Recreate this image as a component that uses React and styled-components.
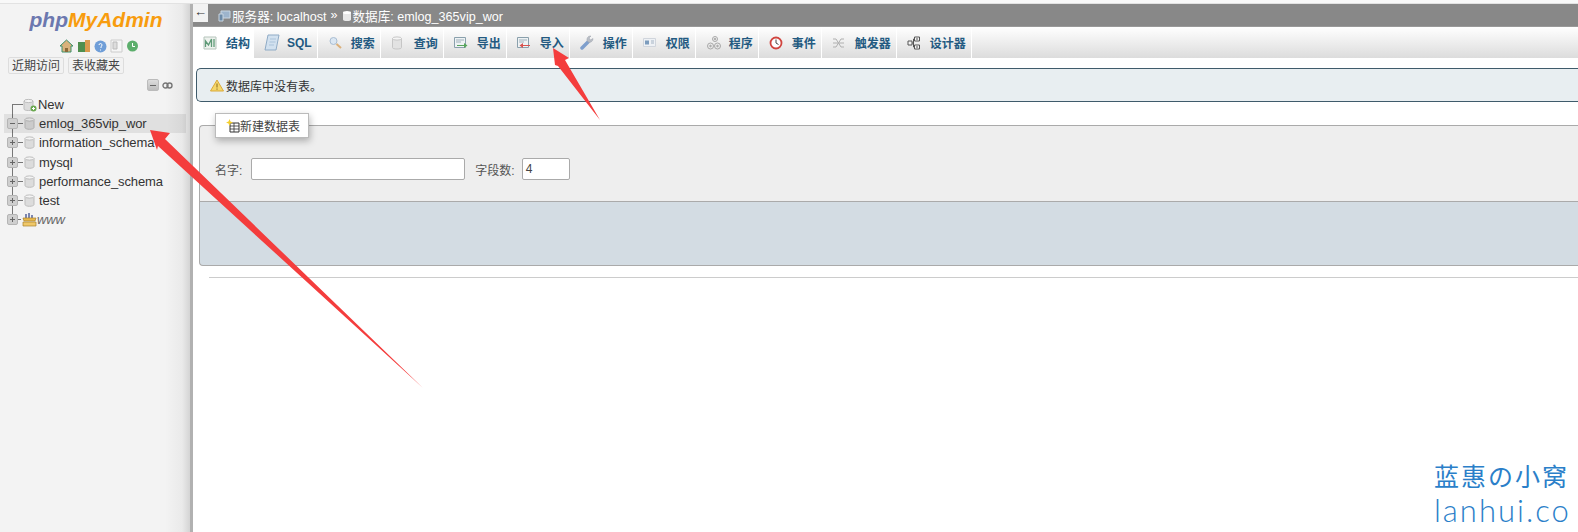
import React from 'react';
import styled, { createGlobalStyle } from 'styled-components';

const GlobalStyle = createGlobalStyle`
  html, body {
    margin: 0;
    padding: 0;
    background: #fff;
    overflow: hidden;
  }
  body {
    font-family: "Liberation Sans", "Noto Sans CJK SC", sans-serif;
    font-size: 12px;
    color: #444;
  }
`;

/* ---------- icons ---------- */

const Db = () => (
  <svg width="11" height="13" viewBox="0 0 11 13">
    <path d="M1 2.500v8c0 1 2 1.800 4.500 1.800S10 11.500 10 10.500v-8z" fill="#dcdcdc" stroke="#bdbdbd" />
    <ellipse cx="5.500" cy="2.500" rx="4.500" ry="1.600" fill="#f4f4f4" stroke="#bdbdbd" />
  </svg>
);

const NewDb = () => (
  <svg width="15" height="14" viewBox="0 0 15 14">
    <path d="M1 3v8c0 1 2 1.500 4.500 1.500S10 12 10 11V3z" fill="#dcdcdc" stroke="#bdbdbd" />
    <ellipse cx="5.500" cy="3" rx="4.500" ry="1.600" fill="#f4f4f4" stroke="#bdbdbd" />
    <circle cx="10.500" cy="10.500" r="3" fill="#6aa84f" />
    <path d="M9 10.500h3M10.500 9v3" stroke="#fff" />
  </svg>
);

const WwwIcon = () => (
  <svg width="15" height="15" viewBox="0 0 15 15">
    <path d="M3 6V2h2v4zM6 6V1h2v5zM9 6V3h2v3z" fill="#7c86b0" />
    <path d="M1 6h13l-1 3H2z" fill="#e8b84a" stroke="#a9822d" strokeWidth=".7" />
    <path d="M1 10h13v4H1z" fill="#f0c869" stroke="#a9822d" strokeWidth=".7" />
  </svg>
);

const TabIcon = ({ name }) => {
  switch (name) {
    case 'structure':
      return (
        <svg width="14" height="14" viewBox="0 0 14 14">
          <path d="M1 1h12v12H1z" fill="#eef2ee" stroke="#b5c4bb" />
          <path d="M2.500 11V5l3 4 3-6v8M11 3v8" fill="none" stroke="#5f9a78" strokeWidth="1.300" />
        </svg>
      );
    case 'sql':
      return (
        <svg width="16" height="17" viewBox="0 0 16 17">
          <path d="M4 1h11l-3 15H1z" fill="#d2e1ef" stroke="#8fabc6" />
          <path d="M6 5h6M5.500 8h6M5 11h5" stroke="#abc3da" />
        </svg>
      );
    case 'search':
      return (
        <svg width="15" height="14" viewBox="0 0 15 14">
          <circle cx="5.500" cy="5" r="3.500" fill="#dbe7f3" stroke="#a9bdd2" />
          <path d="M8.500 8l4.500 4" stroke="#dcb07a" strokeWidth="2" />
        </svg>
      );
    case 'query':
      return (
        <svg width="12" height="14" viewBox="0 0 12 14">
          <path d="M1.500 2.500v9c0 1 2 1.500 4.500 1.500s4.500-.5 4.500-1.500v-9z" fill="#e2e2e2" stroke="#c6c6c6" />
          <ellipse cx="6" cy="2.500" rx="4.500" ry="1.600" fill="#f5f5f5" stroke="#c6c6c6" />
        </svg>
      );
    case 'export':
      return (
        <svg width="14" height="12" viewBox="0 0 14 12">
          <path d="M.5 .5h11v10H.5z" fill="#eef2f4" stroke="#8aa0ac" />
          <path d="M2 3h8M2 5h5" stroke="#9fb0ba" />
          <path d="M3 8h7V6l3.500 2.500L10 11V9H3z" fill="#58a55c" />
        </svg>
      );
    case 'import':
      return (
        <svg width="14" height="12" viewBox="0 0 14 12">
          <path d="M.5 .5h11v10H.5z" fill="#eef2f4" stroke="#8aa0ac" />
          <path d="M2 3h8M2 5h5" stroke="#9fb0ba" />
          <path d="M13 8H6V6L2.500 8.500 6 11V9h7z" fill="#d8534f" />
        </svg>
      );
    case 'ops':
      return (
        <svg width="15" height="15" viewBox="0 0 15 15">
          <path d="M2 13l6-6" stroke="#7f9fcc" strokeWidth="3.500" strokeLinecap="round" />
          <path d="M8 7a3.500 3.500 0 0 1 3-6l-2 2 1.500 2 2.500-1.500A3.500 3.500 0 0 1 8 7z" fill="#b9bec6" stroke="#9aa0aa" strokeWidth=".5" />
        </svg>
      );
    case 'priv':
      return (
        <svg width="13" height="9" viewBox="0 0 13 9">
          <path d="M.5 .5h12v8H.5z" fill="#eef1f5" stroke="#d0d5dc" />
          <path d="M2 2.500h4v4H2z" fill="#7c9cbd" />
          <path d="M8 3h3M8 5h3" stroke="#a5b4c4" />
        </svg>
      );
    case 'routine':
      return (
        <svg width="16" height="16" viewBox="0 0 16 16" fill="none" stroke="#a8a8a8">
          <circle cx="9" cy="4" r="2.500" />
          <circle cx="4.500" cy="11" r="3" />
          <circle cx="11.500" cy="11" r="3" />
          <circle cx="9" cy="4" r=".8" fill="#a8a8a8" />
          <circle cx="4.500" cy="11" r=".8" fill="#a8a8a8" />
          <circle cx="11.500" cy="11" r=".8" fill="#a8a8a8" />
        </svg>
      );
    case 'event':
      return (
        <svg width="14" height="14" viewBox="0 0 14 14">
          <circle cx="7" cy="7" r="5.500" fill="#fff" stroke="#d0453f" strokeWidth="1.800" />
          <path d="M7 3.500V7l2.500 1.500" fill="none" stroke="#444" />
        </svg>
      );
    case 'trigger':
      return (
        <svg width="13" height="10" viewBox="0 0 13 10" fill="none" stroke="#b0b0b0">
          <path d="M1 1h3l5 8h3M1 9h3l5-8h3M1 5h11" />
        </svg>
      );
    default:
      return (
        <svg width="14" height="14" viewBox="0 0 14 14">
          <path d="M7.500 1h5v4h-5zM7.500 9h5v4h-5zM1 5h4v4H1z" fill="#f4f4f4" stroke="#555" />
          <path d="M5 7h1.500M6.500 3v8M6.500 3h1M6.500 11h1M9 3h2M9 11h2" stroke="#555" />
        </svg>
      );
  }
};

/* ---------- layout ---------- */

const Page = styled.div`
  width: 1578px;
  height: 532px;
  position: relative;
  overflow: hidden;
  background: #fff;
`;

const TopStrip = styled.div`
  height: 4px;
  background: #f8f8f8;
  border-bottom: 1px solid #e2e2e2;
  box-sizing: border-box;
`;

const Columns = styled.div`
  display: flex;
  height: 528px;
`;

const Sidebar = styled.aside`
  width: 190px;
  flex: none;
  background: linear-gradient(to right, #f3f3f3 0, #f3f3f3 165px, #eaeaea 182px, #d4d4d4 190px);
`;

const Main = styled.main`
  flex: 1;
  min-width: 0;
  border-left: 3px solid #b1b1b1;
  background: #fff;
`;

/* ---------- sidebar ---------- */

const Logo = styled.div`
  font: italic bold 21px "Liberation Sans", sans-serif;
  text-align: center;
  color: #f89c0e;
  padding: 4px 0 0 0;
  margin-left: 2px;
  height: 31px;
  box-sizing: border-box;
  white-space: nowrap;
`;

const Php = styled.span`
  color: #6c78af;
`;

const QuickIcons = styled.div`
  display: flex;
  align-items: center;
  gap: 3px;
  padding-left: 59px;
  height: 18px;
  margin-top: 2px;
`;

const RecentRow = styled.div`
  display: flex;
  gap: 4px;
  padding-left: 8px;
  margin-top: 2px;
`;

const RecentButton = styled.div`
  height: 17px;
  line-height: 16px;
  padding: 0 3px;
  font-size: 12px;
  color: #444;
  background: #f2f2f2;
  border: 1px solid #ddd;
  border-radius: 2px;
  box-sizing: border-box;
`;

const TreeTools = styled.div`
  display: flex;
  justify-content: flex-end;
  align-items: center;
  gap: 3px;
  padding-right: 17px;
  height: 12px;
  margin-top: 5px;
`;

const CollapseAll = styled.div`
  width: 12px;
  height: 12px;
  box-sizing: border-box;
  border: 1px solid #bbb;
  border-radius: 2px;
  background: linear-gradient(#ddd, #bdbdbd);
  display: flex;
  align-items: center;
  justify-content: center;
  &::before {
    content: '';
    width: 6px;
    height: 1px;
    background: #666;
  }
`;

const Tree = styled.ul`
  list-style: none;
  margin: 4px 0 0 4px;
  padding: 0;
  position: relative;
  width: 182px;
  &::before {
    content: '';
    position: absolute;
    left: 8px;
    top: 9px;
    height: 112px;
    width: 1px;
    background: #777;
  }
`;

const TreeRow = styled.li`
  height: 19.200px;
  display: flex;
  align-items: center;
  position: relative;
  padding-left: 3px;
  white-space: nowrap;
  font-size: 13px;
  color: #333;
`;

const ActiveBand = styled.span`
  position: absolute;
  inset: 0;
  background: rgba(0, 0, 0, 0.075);
`;

const Expander = styled.span`
  width: 11px;
  height: 11px;
  flex: none;
  box-sizing: border-box;
  border: 1px solid #b5b5b5;
  border-radius: 2px;
  background: #cfcfcf;
  position: relative;
  &::before {
    content: '';
    position: absolute;
    left: 2px;
    right: 2px;
    top: 4px;
    height: 1px;
    background: #666;
  }
  &::after {
    content: '';
    display: ${(p) => (p.$open ? 'none' : 'block')};
    position: absolute;
    top: 2px;
    bottom: 2px;
    left: 4px;
    width: 1px;
    background: #666;
  }
`;

const Spacer = styled.span`
  width: 5px;
  flex: none;
`;

const Dash = styled.span`
  width: ${(p) => p.$w || 5}px;
  height: 1px;
  flex: none;
  background: #777;
`;

const NodeIcon = styled.span`
  width: 15px;
  margin-left: ${(p) => p.$ml ?? 1}px;
  flex: none;
  display: flex;
  align-items: center;
`;

const NodeName = styled.span`
  font-style: ${(p) => (p.$italic ? 'italic' : 'normal')};
  color: ${(p) => (p.$italic ? '#666' : '#333')};
  letter-spacing: -0.1px;
  position: relative;
`;

/* ---------- main ---------- */

const ServerBar = styled.div`
  height: 23px;
  background: #888;
  display: flex;
  align-items: center;
  color: #fff;
  font-size: 12.600px;
  border-bottom: 1px solid #999;
  box-sizing: border-box;
`;

const BackButton = styled.div`
  width: 15px;
  height: 18px;
  margin-bottom: 5px;
  background: #f2f2f2;
  color: #333;
  font-size: 13px;
  line-height: 15px;
  text-align: center;
  margin-right: 10px;
`;

const Crumb = styled.span`
  display: inline-flex;
  align-items: center;
  gap: 1px;
  white-space: nowrap;
  margin-top: 1px;
`;

const Sep = styled.span`
  margin: 0 4px;
`;

const TabBar = styled.nav`
  height: 31px;
  display: flex;
  background: linear-gradient(#fff, #dcdcdc);
`;

const Tab = styled.div`
  display: flex;
  align-items: center;
  height: 100%;
  box-sizing: border-box;
  padding: 0 ${(p) => (p.$active ? 3 : 5)}px 0 10px;
  border-right: 1px solid #fff;
  font-size: 12px;
  font-weight: bold;
  color: #235a81;
  white-space: nowrap;
  background: ${(p) => (p.$active ? '#fff' : 'linear-gradient(#fff, #dcdcdc)')};
`;

const TabGlyph = styled.span`
  width: 16px;
  margin-right: 7px;
  flex: none;
  display: flex;
  align-items: center;
`;

const TabLabel = styled.span`
  min-width: 24px;
`;

const Notice = styled.div`
  margin: 10px 0 0 3px;
  height: 34px;
  box-sizing: border-box;
  display: flex;
  align-items: center;
  gap: 2px;
  padding-left: 13px;
  background: #e8eef1;
  border: 1px solid #3f5b6b;
  border-right: none;
  border-radius: 5px 0 0 5px;
  color: #333;
`;

const Fieldset = styled.section`
  margin: 23px 0 0 6px;
  height: 77px;
  box-sizing: border-box;
  background: #eee;
  border: 1px solid #aaa;
  border-right: none;
  border-radius: 4px 0 0 0;
`;

const Legend = styled.div`
  margin: -13px 0 0 15px;
  width: 94px;
  height: 25px;
  box-sizing: border-box;
  background: #fff;
  border: 1px solid #bbb;
  box-shadow: 1px 3px 7px rgba(0, 0, 0, 0.28);
  display: flex;
  align-items: center;
  padding-left: 10px;
  color: #444;
  font-size: 12px;
`;

const FormRow = styled.div`
  display: flex;
  align-items: center;
  margin: 20px 0 0 15px;
`;

const FieldLabel = styled.label`
  color: #555;
  font-size: 12px;
  margin-right: ${(p) => p.$mr}px;
`;

const TextInput = styled.div`
  width: ${(p) => p.$w}px;
  height: 22px;
  box-sizing: border-box;
  background: #fff;
  border: 1px solid #aaa;
  border-radius: 2px;
  margin-right: ${(p) => p.$mr || 0}px;
  padding-left: 3px;
  line-height: 20px;
  color: #444;
  font-size: 12px;
`;

const FieldsetFooter = styled.div`
  margin-left: 6px;
  height: 64px;
  box-sizing: border-box;
  background: #d3dce3;
  border: 1px solid #aaa;
  border-top: none;
  border-right: none;
  border-radius: 0 0 0 4px;
`;

const Rule = styled.hr`
  margin: 11px 0 0 16px;
  border: none;
  border-top: 1px solid #ccc;
`;

/* ---------- overlay ---------- */

const Arrows = styled.svg`
  position: absolute;
  inset: 0;
  pointer-events: none;
`;

const Watermark = styled.div`
  position: absolute;
  left: 1434px;
  top: 458px;
  width: 136px;
  color: #2b7fc9;
`;

const WatermarkTitle = styled.div`
  font: 25px "Noto Sans CJK SC", sans-serif;
  line-height: 34px;
  white-space: nowrap;
  letter-spacing: 2px;
`;

const WatermarkUrl = styled.div`
  font: 300 31px Lato, sans-serif;
  line-height: 36px;
  letter-spacing: 2px;
  white-space: nowrap;
`;

const tabs = [
  ['structure', '结构'],
  ['sql', 'SQL'],
  ['search', '搜索'],
  ['query', '查询'],
  ['export', '导出'],
  ['import', '导入'],
  ['ops', '操作'],
  ['priv', '权限'],
  ['routine', '程序'],
  ['event', '事件'],
  ['trigger', '触发器'],
  ['designer', '设计器'],
];

const databases = [
  { name: 'emlog_365vip_wor', open: true, active: true },
  { name: 'information_schema' },
  { name: 'mysql' },
  { name: 'performance_schema' },
  { name: 'test' },
];

export default function App() {
  return (
    <Page>
      <GlobalStyle />
      <TopStrip />
      <Columns>
        <Sidebar>
          <Logo>
            <Php>php</Php>MyAdmin
          </Logo>
          <QuickIcons>
            <svg width="15" height="14" viewBox="0 0 15 14">
              <path d="M7.500 1L1 7h2v6h9V7h2z" fill="#d9b27c" stroke="#3d8f6a" />
              <path d="M6 9h3v4H6z" fill="#8a6a3a" />
            </svg>
            <svg width="14" height="14" viewBox="0 0 14 14">
              <path d="M1 3h7v10H1z" fill="#4f8f4f" />
              <path d="M8 1h5v12H8z" fill="#d99a4e" />
            </svg>
            <svg width="13" height="13" viewBox="0 0 13 13">
              <circle cx="6.500" cy="6.500" r="6" fill="#6f9ed8" />
              <path d="M5 5a1.500 1.500 0 1 1 2 1.500V8M6.500 9.500v1" stroke="#fff" fill="none" />
            </svg>
            <svg width="13" height="14" viewBox="0 0 13 14">
              <path d="M1 1h11v12H1z" fill="#f6f6f6" stroke="#ccc" />
              <path d="M3 3h4v7H3z" fill="#ddd" stroke="#bbb" />
            </svg>
            <svg width="13" height="14" viewBox="0 0 13 14">
              <circle cx="6.500" cy="7" r="5.500" fill="#5cae6c" />
              <path d="M6.500 4v3.500h2.500" stroke="#fff" fill="none" />
            </svg>
          </QuickIcons>
          <RecentRow>
            <RecentButton>近期访问</RecentButton>
            <RecentButton>表收藏夹</RecentButton>
          </RecentRow>
          <TreeTools>
            <CollapseAll />
            <svg width="11" height="7" viewBox="0 0 11 7" fill="none" stroke="#777" strokeWidth="1.400">
              <rect x="1" y="1" width="5" height="5" rx="2.500" />
              <rect x="5" y="1" width="5" height="5" rx="2.500" />
            </svg>
          </TreeTools>
          <Tree>
            <TreeRow>
              <Spacer />
              <Dash $w={11} />
              <NodeIcon $ml={0}>
                <NewDb />
              </NodeIcon>
              <NodeName>New</NodeName>
            </TreeRow>
            {databases.map((db) => (
              <TreeRow key={db.name}>
                {db.active && <ActiveBand />}
                <Expander $open={db.open} />
                <Dash />
                <NodeIcon>
                  <Db />
                </NodeIcon>
                <NodeName>{db.name}</NodeName>
              </TreeRow>
            ))}
            <TreeRow>
              <Expander />
              <Dash $w={3} />
              <NodeIcon>
                <WwwIcon />
              </NodeIcon>
              <NodeName $italic>www</NodeName>
            </TreeRow>
          </Tree>
        </Sidebar>
        <Main>
          <ServerBar>
            <BackButton>←</BackButton>
            <Crumb>
              <svg width="13" height="12" viewBox="0 0 13 12">
                <path d="M3 1h9v7H3z" fill="#9db4cc" stroke="#c9d6e2" />
                <path d="M1 4h4v7H1z" fill="#6d8ba8" stroke="#c9d6e2" />
              </svg>
              服务器: localhost
            </Crumb>
            <Sep>»</Sep>
            <Crumb>
              <svg width="10" height="12" viewBox="0 0 10 12">
                <path d="M1 2.500v7c0 1 1.800 1.500 4 1.500s4-.5 4-1.500v-7z" fill="#e8e8e8" />
                <ellipse cx="5" cy="2.500" rx="4" ry="1.500" fill="#fff" />
              </svg>
              数据库: emlog_365vip_wor
            </Crumb>
          </ServerBar>
          <TabBar>
            {tabs.map(([icon, label], i) => (
              <Tab key={icon} $active={i === 0}>
                <TabGlyph>
                  <TabIcon name={icon} />
                </TabGlyph>
                <TabLabel>{label}</TabLabel>
              </Tab>
            ))}
          </TabBar>
          <Notice>
            <svg width="14" height="13" viewBox="0 0 14 13">
              <path d="M7 1l6.500 11H.5z" fill="#f5d76a" stroke="#d9a93a" />
              <path d="M7 4.500v4M7 9.500v1.200" stroke="#8a6a1a" />
            </svg>
            数据库中没有表。
          </Notice>
          <Fieldset>
            <Legend>
              <svg width="14" height="14" viewBox="0 0 14 14">
                <path d="M4 4h9v9H4z" fill="#fff" stroke="#333" />
                <path d="M4 7h9M4 10h9M8 4v9" stroke="#333" strokeWidth=".8" />
                <path d="M3.500 0l1 2.500L7 3.500 4.500 4.500l-1 2.500-1-2.500L0 3.500l2.500-1z" fill="#f4cf2e" />
              </svg>
              新建数据表
            </Legend>
            <FormRow>
              <FieldLabel $mr={9}>名字:</FieldLabel>
              <TextInput $w={214} $mr={10} />
              <FieldLabel $mr={7}>字段数:</FieldLabel>
              <TextInput $w={48}>4</TextInput>
            </FormRow>
          </Fieldset>
          <FieldsetFooter />
          <Rule />
        </Main>
      </Columns>
      <Arrows width="1578" height="532" viewBox="0 0 1578 532">
        <polygon points="150,130 170,133 165,139 423,388 158,146 157,150" fill="#f43d3d" />
        <polygon points="553,48 569,58 565,60 600,120 558,66 555,65" fill="#f43d3d" />
      </Arrows>
      <Watermark>
        <WatermarkTitle>蓝惠の小窝</WatermarkTitle>
        <WatermarkUrl>lanhui.co</WatermarkUrl>
      </Watermark>
    </Page>
  );
}
